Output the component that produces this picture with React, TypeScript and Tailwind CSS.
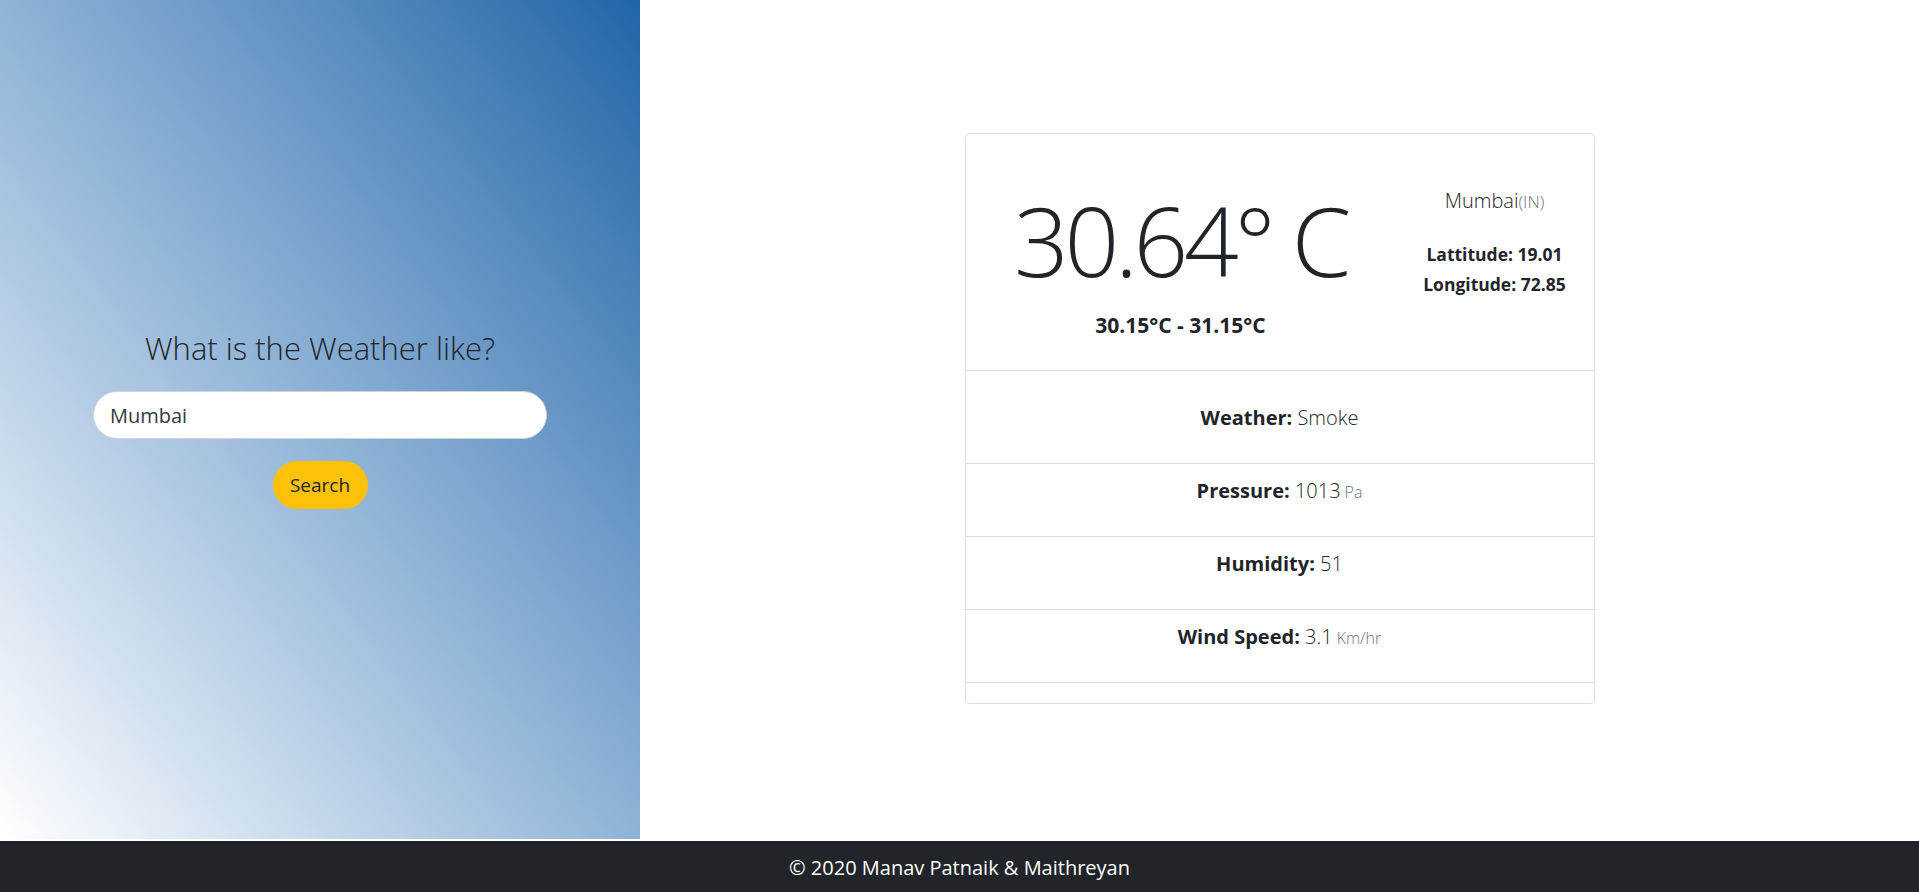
import React from "react";

const font = { fontFamily: '"Open Sans", "Noto Sans", Arial, sans-serif' };

export default function App() {
	return (
		<div className="min-h-screen bg-white text-[#212529]" style={font}>
			<div className="flex h-[839px]">
				<SearchPanel />
				<div className="flex flex-1 items-center justify-center">
					<WeatherCard />
				</div>
			</div>
			<footer className="mt-[2px] bg-[#212529] py-[12px] text-center text-[20px] leading-[30px] text-white">
				© 2020 Manav Patnaik &amp; Maithreyan
			</footer>
		</div>
	);
}

function SearchPanel() {
	return (
		<div className="flex w-[640px] flex-col items-center justify-center bg-linear-to-tr from-white via-[#8fb3d6] to-[#1f66a8]">
			<h3 className="text-[31px] leading-[36px] font-light">What is the Weather like?</h3>
			<input
				className="mt-[25px] h-[48px] w-[454px] rounded-full border border-[#ced4da] bg-white px-4 text-[20px] text-[#343a40] outline-none"
				defaultValue="Mumbai"
			/>
			<button className="mt-[22px] h-[48px] w-[95px] rounded-full bg-[#ffc107] text-[19px] text-[#212529]">
				Search
			</button>
		</div>
	);
}

function Row({ label, value, unit, top }: { label: string; value: string; unit?: string; top?: boolean }) {
	return (
		<div
			className={
				top
					? "h-[93px] border-b border-[#dfdfdf] pt-[32px] text-center text-[20px] leading-[30px]"
					: "h-[73px] border-b border-[#dfdfdf] pt-[12px] text-center text-[20px] leading-[30px]"
			}
		>
			<span className="font-bold">{label}:</span> <span className="font-light">{value}</span>
			{unit && <small className="ml-1 text-[16px] font-light text-[#6c757d]">{unit}</small>}
		</div>
	);
}

function WeatherCard() {
	return (
		<div className="mb-[2px] w-[630px] rounded border border-[#dfdfdf] bg-white">
			<div className="flex h-[237px] border-b border-[#dfdfdf]">
				<div className="flex w-[430px] flex-col items-center pt-[46px]">
					<div className="text-[96px] leading-[120px] font-light tracking-[-0.045em]">30.64° C</div>
					<div className="mt-[11px] text-[21px] leading-[28px] font-bold">30.15°C - 31.15°C</div>
				</div>
				<div className="flex flex-1 flex-col items-center pt-[52px]">
					<div className="text-[20px] leading-[30px] font-light">
						Mumbai<span className="text-[17px] text-[#6c757d]">(IN)</span>
					</div>
					<div className="mt-[24px] text-[17.5px] leading-[26px] font-bold">Lattitude: 19.01</div>
					<div className="mt-[4px] text-[17.5px] leading-[26px] font-bold">Longitude: 72.85</div>
				</div>
			</div>
			<Row label="Weather" value="Smoke" top />
			<Row label="Pressure" value="1013" unit="Pa" />
			<Row label="Humidity" value="51" />
			<Row label="Wind Speed" value="3.1" unit="Km/hr" />
			<div className="h-[20px]" />
		</div>
	);
}
